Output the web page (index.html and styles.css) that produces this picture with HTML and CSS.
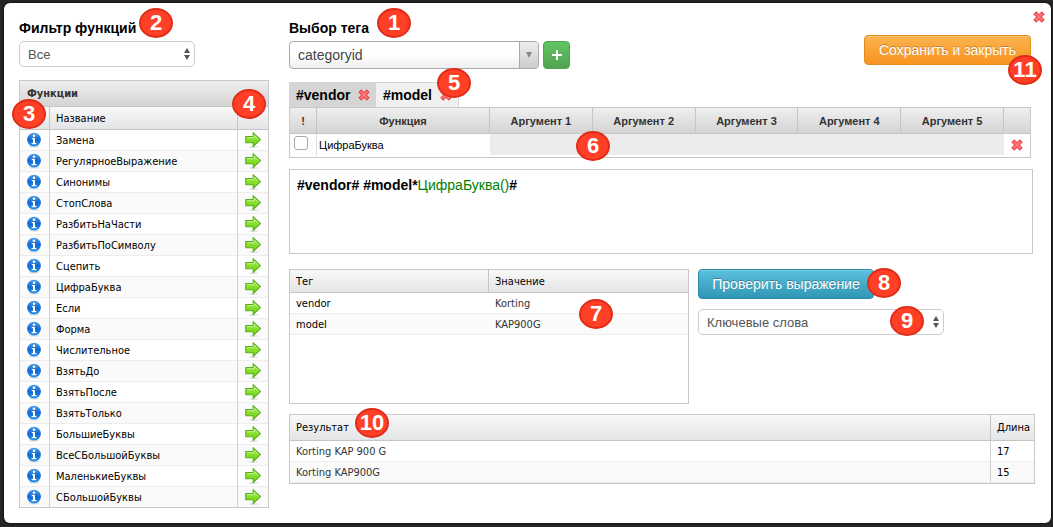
FILE: index.html
```html
<!DOCTYPE html>
<html lang="ru">
<head>
<meta charset="utf-8">
<title>Выбор тега</title>
<link rel="stylesheet" href="styles.css">
</head>
<body>
<svg class="sprite" aria-hidden="true">
  <defs>
    <linearGradient id="blue" x1="0" y1="0" x2="0" y2="1"><stop offset="0" stop-color="#4a9fe8"/><stop offset=".5" stop-color="#1369d0"/><stop offset="1" stop-color="#2090f0"/></linearGradient>
    <linearGradient id="green" x1="0" y1="0" x2="0" y2="1"><stop offset="0" stop-color="#a4ec4c"/><stop offset="1" stop-color="#6fd010"/></linearGradient>
    <symbol id="info" viewBox="0 0 16 16">
      <ellipse cx="8" cy="14.6" rx="5" ry="1" fill="#ddd"/>
      <circle cx="8" cy="7.6" r="6.9" fill="url(#blue)"/>
      <circle cx="8" cy="3.7" r="1.3" fill="#fff"/>
      <path d="M5.8 6h3.2v5h1.4v1.3H5.6V11H7V7.3H5.8z" fill="#fff"/>
    </symbol>
    <symbol id="arrow" viewBox="0 0 16 16">
      <ellipse cx="8.5" cy="15" rx="5" ry=".8" fill="#ddd"/>
      <path d="M.8 4.6h7.4V.8L15.3 7.6l-7.1 6.9v-3.8H.8z" fill="url(#green)" stroke="#55b01c" stroke-width="1.1"/>
      <path d="M1.9 5.7h7.3V3.2l4.4 4.3" fill="none" stroke="#c9f595" stroke-width=".9"/>
    </symbol>
    <symbol id="cross" viewBox="0 0 12 12">
      <path d="M3.2.8 6 3.6 8.8.8l2.4 2.4L8.4 6l2.8 2.8-2.4 2.4L6 8.4l-2.8 2.8L.8 8.8 3.6 6 .8 3.2z" fill="#f8666a" stroke="#e8383f" stroke-width="1"/>
      <path d="m3.2 3 5.6 5.8M8.8 3 3.2 8.8" stroke="#ff8585" stroke-width="1"/>
    </symbol>
    <symbol id="updown" viewBox="0 0 6 12"><path d="M0 5 3 0l3 5zM0 7h6l-3 5z" fill="#555"/></symbol>
  </defs>
</svg>
<main class="modal">
  <button class="icon-button modal-close" aria-label="Закрыть"><svg class="cross"><use href="#cross"/></svg></button>

  <aside class="sidebar">
    <label class="title" for="filter">Фильтр функций</label>
    <div class="select-wrap filter">
      <select id="filter" class="select"><option>Все</option></select>
      <svg class="updown"><use href="#updown"/></svg>
    </div>
    <section class="panel functions">
      <h2 class="panel-title">Функции</h2>
      <table class="grid">
        <colgroup><col class="col-icon"><col><col class="col-icon"></colgroup>
        <thead><tr><th></th><th>Название</th><th></th></tr></thead>
        <tbody id="function-rows"></tbody>
      </table>
      <span class="badge badge-3">3</span>
      <span class="badge badge-4">4</span>
    </section>
    <span class="badge badge-2">2</span>
  </aside>

  <div class="content">
    <header class="top">
      <div>
        <label class="title" for="tag">Выбор тега</label>
        <div class="tag-row">
          <div class="combo">
            <select id="tag" class="combo-select"><option>categoryid</option></select>
            <span class="combo-arrow"><svg class="down" viewBox="0 0 6 6"><path d="M0 0h6L3 6z" fill="#888"/></svg></span>
          </div>
          <button class="add" aria-label="Добавить"><svg class="plus" viewBox="0 0 12 12"><path d="M6 1v10M1 6h10" stroke="#fff" stroke-width="2"/></svg></button>
        </div>
      </div>
      <button class="button save">Сохранить и закрыть</button>
      <span class="badge badge-1">1</span>
      <span class="badge badge-11">11</span>
    </header>

    <section class="editor">
      <div class="tabs">
        <div class="tab"><a href="#vendor">#vendor</a><button class="icon-button" aria-label="Удалить vendor"><svg class="cross"><use href="#cross"/></svg></button></div>
        <div class="tab tab-active"><a href="#model">#model</a><button class="icon-button" aria-label="Удалить model"><svg class="cross"><use href="#cross"/></svg></button></div>
      </div>
      <div class="panel args-panel">
        <table class="args">
          <colgroup><col class="col-flag"><col class="col-function"><col><col><col><col><col><col class="col-delete"></colgroup>
          <thead><tr><th>!</th><th>Функция</th><th>Аргумент 1</th><th>Аргумент 2</th><th>Аргумент 3</th><th>Аргумент 4</th><th>Аргумент 5</th><th></th></tr></thead>
          <tbody><tr>
            <td class="flag"><input type="checkbox" class="check" aria-label="ЦифраБуква"></td>
            <td class="function-name">ЦифраБуква</td>
            <td class="disabled" colspan="5"></td>
            <td class="delete"><button class="icon-button" aria-label="Удалить функцию"><svg class="cross"><use href="#cross"/></svg></button></td>
          </tr></tbody>
        </table>
      </div>
      <span class="badge badge-5">5</span>
      <span class="badge badge-6">6</span>
    </section>

    <div class="expression"><b>#vendor# #model*</b><span class="call">ЦифраБуква()</span><b>#</b></div>

    <div class="check-row">
      <section class="panel tags">
        <table class="grid">
          <thead><tr><th>Тег</th><th>Значение</th></tr></thead>
          <tbody class="plain"><tr><td>vendor</td><td class="soft">Korting</td></tr><tr><td>model</td><td class="soft">KAP900G</td></tr></tbody>
        </table>
        <span class="badge badge-7">7</span>
      </section>
      <div class="actions">
        <button class="button verify">Проверить выражение</button>
        <div class="select-wrap">
          <select class="select" aria-label="Тип"><option>Ключевые слова</option></select>
          <svg class="updown"><use href="#updown"/></svg>
        </div>
        <span class="badge badge-8">8</span>
        <span class="badge badge-9">9</span>
      </div>
    </div>

    <section class="panel results">
      <table class="grid">
        <colgroup><col><col class="col-length"></colgroup>
        <thead><tr><th>Результат</th><th>Длина</th></tr></thead>
        <tbody><tr><td class="soft">Korting KAP 900 G</td><td>17</td></tr><tr><td class="soft">Korting KAP900G</td><td>15</td></tr></tbody>
      </table>
      <span class="badge badge-10">10</span>
    </section>
  </div>
</main>
<script src="script.js"></script>
</body>
</html>
```

FILE: styles.css
```css
* { box-sizing: border-box; }
body { margin: 0; padding: 3px 2px 5px 4px; background: #262625; font-family: "Liberation Sans", sans-serif; color: #000; }
button, select, input { font-family: inherit; margin: 0; }
.sprite { position: absolute; width: 0; height: 0; }

.modal { position: relative; display: flex; align-items: flex-start; gap: 20px; padding: 15px 16px 15px 15px; background: #fff; border-radius: 6px; box-shadow: 0 0 3px #000; }
.sidebar { position: relative; flex: 0 0 250px; }
.content { flex: 1; min-width: 0; }
.title { display: block; height: 23px; font-size: 14px; line-height: 20px; font-weight: bold; }

.icon-button { display: block; padding: 0; border: 0; background: none; cursor: pointer; }
.icon-button svg { display: block; }
.cross { width: 12px; height: 12px; }
.info, .arrow { width: 16px; height: 16px; }
.modal-close { position: absolute; top: 8px; right: 6px; }

.select-wrap { position: relative; }
.select { display: block; width: 100%; height: 26px; padding: 0 20px 0 8px; appearance: none; border: 1px solid #ccc; border-radius: 5px; background: #fff; color: #555; font-size: 13px; }
.updown { position: absolute; top: 7px; right: 5px; width: 6px; height: 12px; pointer-events: none; }
.filter { width: 176px; }

.panel { position: relative; border: 1px solid #c8c8c8; }
.functions { margin-top: 13px; }
.panel-title { margin: 0; padding-left: 7px; font-size: 11px; line-height: 25px; color: #333; background: linear-gradient(#efefef, #d4d4d4); border-bottom: 1px solid #c8c8c8; font-family: "DejaVu Sans Condensed", "DejaVu Sans", sans-serif; }
table { width: 100%; table-layout: fixed; border-collapse: separate; border-spacing: 0; }
th, td { padding: 0 6px; text-align: left; white-space: nowrap; }
.grid { font: 11px "DejaVu Sans Condensed", "DejaVu Sans", sans-serif; }
.grid th { height: 23px; font-weight: normal; background: linear-gradient(#f9f9f9, #e3e4e6); border-right: 1px solid #c5c5c5; border-bottom: 1px solid #c5c5c5; }
.grid td { height: 21px; border-right: 1px solid #d0d0d0; border-bottom: 1px solid #ededed; }
.grid tr > :last-child { border-right: 0; }
.grid .plain td { border-right: 0; }
.grid tbody tr:nth-child(even) { background: #fafafa; }
.functions .grid tbody tr:last-child td { height: 20px; border-bottom: 0; }
.soft { color: #333; }
.col-icon { width: 30px; }
.functions .icon-button { margin: 0 auto; }
.functions td:first-child { padding: 0 2px 0 0; }
.functions td:last-child { padding: 0 1px 0 0; }

.top { position: relative; display: flex; justify-content: space-between; margin-right: 4px; }
.tag-row { display: flex; gap: 4px; }
.combo { position: relative; width: 250px; }
.combo-select { display: block; width: 100%; height: 28px; padding: 0 24px 0 8px; appearance: none; border: 1px solid #aaa; border-radius: 4px; background: linear-gradient(#fff 50%, #eee); color: #444; font-size: 14px; }
.combo-arrow { position: absolute; top: 1px; right: 1px; bottom: 1px; width: 19px; display: grid; place-items: center; border-left: 1px solid #aaa; border-radius: 0 3px 3px 0; background: linear-gradient(#eee, #ccc); pointer-events: none; }
.down { width: 6px; height: 6px; }
.add { display: grid; place-items: center; width: 27px; height: 28px; padding: 0; border: 1px solid #51a351; border-radius: 4px; background: linear-gradient(#62c462, #51a351); }
.plus { width: 12px; height: 12px; }
.button { height: 30px; padding: 0; border: 1px solid; border-radius: 4px; color: #fff; font-size: 14px; text-shadow: 0 -1px 0 rgba(0, 0, 0, .25); box-shadow: inset 0 1px 0 rgba(255, 255, 255, .2); cursor: pointer; }
.save { width: 167px; margin-top: 17px; background: linear-gradient(#fbb450, #f8931f); border-color: #e08e20; }
.verify { width: 176px; margin-bottom: 10px; background: linear-gradient(#5bc0de, #2f96b4); border-color: #2a8ba8; }

.editor { position: relative; margin: 13px 4px 0 0; }
.tabs { display: flex; }
.tab { display: flex; align-items: center; justify-content: space-between; width: 87px; height: 25px; padding: 0 6px 0 7px; background: #d5d5d5; }
.tab-active { width: 83px; background: #f0f0f0; border: 1px solid #d5d5d5; border-width: 1px 1px 0 0; }
.tab a { color: #000; font-size: 14px; font-weight: bold; text-decoration: none; }
.args-panel { padding-bottom: 2px; }
.args { font-size: 11px; }
.args th { height: 26px; padding: 0; text-align: center; color: #333; background: linear-gradient(#efefef, #d4d4d4); border-right: 1px solid #c5c5c5; border-bottom: 1px solid #c8c8c8; }
.args td { height: 21px; }
.args tr > :last-child { border-right: 0; }
.col-flag { width: 27px; }
.col-function { width: 173px; }
.col-delete { width: 26px; }
.args .flag { padding: 0; border-right: 1px solid #ddd; }
.check { display: block; width: 14px; height: 14px; margin: 0 auto 3px 4px; appearance: none; border: 1px solid #aaa; border-radius: 3px; background: #fff; }
.args .function-name { padding: 0 2px; }
.disabled { background: #ececec; }
.args .delete { padding: 0; }
.delete .icon-button { margin: 0 auto; }

.expression { min-height: 85px; margin: 11px 2px 15px 0; padding: 5px 7px; border: 1px solid #c8c8c8; font-size: 14px; line-height: 20px; }
.call { color: #008000; }

.check-row { display: flex; gap: 9px; }
.tags { flex: 0 0 400px; min-height: 135px; }
.actions { position: relative; width: 246px; }
.results { margin-top: 10px; }
.results .grid th { height: 26px; }
.col-length { width: 43px; }

.badge { position: absolute; display: grid; place-items: center; width: 34px; height: 30px; border: 2px solid #e12c18; border-radius: 50%; background: #ff4026; color: #fff; font: bold 22px/24px "Liberation Sans", sans-serif; pointer-events: none; }
.badge-1 { left: 88px; top: -10px; }
.badge-2 { left: 120px; top: -10px; }
.badge-3 { left: -8px; top: 18px; }
.badge-4 { left: 212px; top: 8px; }
.badge-5 { left: 148px; top: -14px; }
.badge-6 { left: 287px; top: 49px; }
.badge-7 { left: 289px; top: 29px; }
.badge-8 { left: 169px; top: -1px; }
.badge-9 { left: 192px; top: 37px; }
.badge-10 { left: 65px; top: -7px; }
.badge-11 { right: -11px; top: 37px; }
```

FILE: script.js
```js
const names = ["Замена", "РегулярноеВыражение", "Синонимы", "СтопСлова", "РазбитьНаЧасти", "РазбитьПоСимволу", "Сцепить", "ЦифраБуква", "Если", "Форма", "Числительное", "ВзятьДо", "ВзятьПосле", "ВзятьТолько", "БольшиеБуквы", "ВсеСБольшойБуквы", "МаленькиеБуквы", "СБольшойБуквы"];

const iconButton = (icon, label) =>
  `<button class="icon-button" aria-label="${label}"><svg class="${icon}"><use href="#${icon}"/></svg></button>`;

document.getElementById("function-rows").innerHTML = names.map(name =>
  `<tr><td>${iconButton("info", "Справка: " + name)}</td><td>${name}</td><td>${iconButton("arrow", "Добавить: " + name)}</td></tr>`
).join("");
```
